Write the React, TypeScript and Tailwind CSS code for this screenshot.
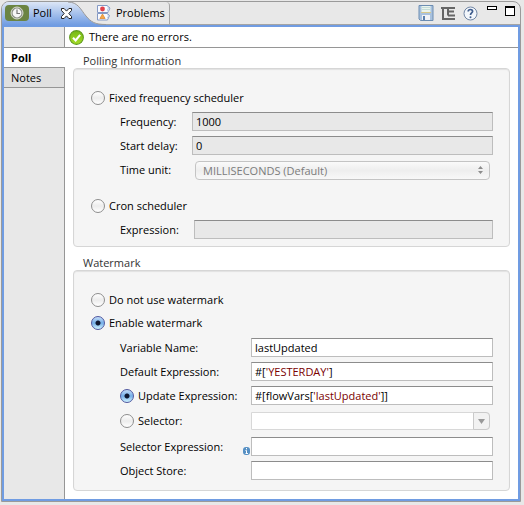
import React from "react";

const fieldBase =
  "block h-[19px] w-full min-w-0 border border-[#bdbdbd] border-t-[#8c8c8c] px-[3px] text-[11px] leading-4 outline-none";

function Radio({ id, name, checked }: { id: string; name: string; checked?: boolean }) {
  return (
    <input
      id={id}
      name={name}
      type="radio"
      defaultChecked={checked}
      className="size-3.5 shrink-0 appearance-none rounded-full border border-[#8e8e8e] bg-[linear-gradient(#ffffff,#ececec_50%,#ffffff)] checked:border-[#5058a0] checked:bg-[radial-gradient(circle,#101830_0_2px,transparent_3px),linear-gradient(#c4dcf8,#74aee8_50%,#d0f4ff)]"
    />
  );
}

function Choice({ id, name, label, checked }: { id: string; name: string; label: string; checked?: boolean }) {
  return (
    <div className="flex h-4 items-center gap-1">
      <Radio id={id} name={name} checked={checked} />
      <label htmlFor={id} className="whitespace-nowrap">{label}</label>
    </div>
  );
}

function CodeField({ id, label, value, children }: { id: string; label?: string; value: string; children: React.ReactNode }) {
  return (
    <div className="relative">
      <input id={id} aria-label={label} defaultValue={value} className={fieldBase + " bg-white text-transparent caret-black"} />
      <span aria-hidden="true" className="pointer-events-none absolute inset-0 flex items-center px-1 text-[11px] leading-4">
        {children}
      </span>
    </div>
  );
}

function Group({ title, children }: { title: string; children: React.ReactNode }) {
  return (
    <fieldset className="min-w-0">
      <legend className="px-2.5 leading-[15px] text-[#333]">{title}</legend>
      <div className="rounded border border-[#d6d6d6] bg-[#f5f5f5] pl-[17px] pr-4 shadow-[inset_0_1px_1px_#e2e2e2]">{children}</div>
    </fieldset>
  );
}

function ClockIcon() {
  return (
    <svg className="h-4 w-6" viewBox="0 0 24 16" aria-hidden="true">
      <rect width="24" height="16" rx="4" fill="#6b8442" />
      <circle cx="12" cy="8" r="6" fill="#8b9085" stroke="#d9ddd2" strokeWidth="1" />
      <circle cx="12" cy="8" r="4.4" fill="#f6f6f6" />
      <path d="M12 4.500v4h3" fill="none" stroke="#777" strokeWidth="1.2" />
    </svg>
  );
}

function CloseIcon() {
  return (
    <svg className="h-[11px] w-[11px]" viewBox="0 0 11 11" aria-hidden="true">
      <path d="M.5 .5h2.6l2.4 2.6L7.9 .5h2.6v2L7.8 5.5l2.7 3v2H7.9L5.5 7.9 3.1 10.5H.5v-2l2.7-3L.5 2.5z" fill="#fff" stroke="#222" />
    </svg>
  );
}

function ProblemsIcon() {
  return (
    <svg className="h-4 w-3.5" viewBox="0 0 14 16" aria-hidden="true">
      <path d="M.5 .5h9.500l3 2.500-2 4.500H.5zM.5 8.500h10l2 2-2 4.500H.5z" fill="#f8faff" stroke="#8499c4" />
      <path d="M10.500 1l1 2-1 2 1 2M10.500 9l1 2-1 2" fill="none" stroke="#b4c4e0" />
      <circle cx="5.500" cy="4" r="2.400" fill="#e2404a" />
      <path d="M5.500 9l2.600 4.500H2.900z" fill="#f6a848" stroke="#e08a34" strokeWidth=".8" />
    </svg>
  );
}

function SaveIcon() {
  return (
    <svg className="h-4 w-4" viewBox="0 0 16 16" aria-hidden="true">
      <path d="M1 .5h14v15H2.500L1 14z" fill="#a9c2de" stroke="#6c8db2" />
      <path d="M3.500 1h9v6h-9z" fill="#eaf4ee" />
      <path d="M4 2.500h8M4 4.500h8" stroke="#c4dcd8" />
      <path d="M3 7.500h10" stroke="#d6c88c" />
      <path d="M4 10h8v5H4z" fill="#f0f3f8" />
      <path d="M5 11h2v4H5z" fill="#5a80ae" />
    </svg>
  );
}

function TreeIcon() {
  return (
    <svg className="h-[15px] w-[15px]" viewBox="0 0 15 15" aria-hidden="true">
      <path d="M0 2h5M2 1v12.500M1 13h13M5 2h9M7 2v7.500M7 5.500h6M7 9.500h7" fill="none" stroke="#666" strokeWidth="2" />
    </svg>
  );
}

function HelpIcon() {
  return (
    <svg className="h-[15px] w-[15px]" viewBox="0 0 15 15" aria-hidden="true">
      <circle cx="7.500" cy="7.500" r="6.500" fill="#f2f6fb" stroke="#7186a4" />
      <path d="M5.200 5.500C5.300 2.800 9.700 2.900 9.600 5.400 9.500 7 7.500 7 7.500 9" fill="none" stroke="#405e8e" strokeWidth="1.700" />
      <circle cx="7.500" cy="11.200" r="1" fill="#405e8e" />
    </svg>
  );
}

function OkIcon() {
  return (
    <svg className="h-[15px] w-[15px]" viewBox="0 0 14 14" aria-hidden="true">
      <defs>
        <linearGradient id="ok" x2="0" y2="1"><stop stopColor="#74b814" /><stop offset="1" stopColor="#a6dc28" /></linearGradient>
      </defs>
      <circle cx="7" cy="7" r="6.400" fill="url(#ok)" stroke="#5e9a1c" />
      <path d="M3.700 7.300l2.500 2.500 4.200-5.200" fill="none" stroke="#fff" strokeWidth="2" />
    </svg>
  );
}

export default function App() {
  return (
    <div className="flex min-h-screen flex-col bg-[#e8e8e8] pb-[3px] pl-px pr-[3px] pt-px font-['Open_Sans','Noto_Sans',sans-serif] text-[11px] font-medium leading-4 text-black">
      <div className="flex flex-1 flex-col overflow-hidden rounded-t-lg border border-[#9a9a9a]">
        <header className="flex h-[23px] items-center justify-between border-b border-[#a4a4a4]">
          <div role="tablist" className="flex h-full">
            <button role="tab" aria-selected="true" className="relative flex w-[94px] items-center pl-[3px]">
              <svg className="absolute left-0 top-0 h-[23px] w-[104px]" viewBox="0 0 104 23" aria-hidden="true">
                <defs>
                  <linearGradient id="tab" x2="0" y2="1"><stop stopColor="#dce6f6" /><stop offset="1" stopColor="#709ce2" /></linearGradient>
                </defs>
                <path d="M0 0H66C76 0 79 8 84 14C89 20 93 23 104 23H0z" fill="url(#tab)" />
                <path d="M66 0C76 0 79 8 84 14C89 20 93 22.500 104 22.500" fill="none" stroke="#999" />
              </svg>
              <span className="relative flex items-center">
                <ClockIcon />
                <span className="w-8 pl-1 text-left">Poll</span>
                <CloseIcon />
              </span>
            </button>
            <button role="tab" aria-selected="false" className="relative flex w-[74px] items-center gap-[5px] rounded-tr border-r border-[#a4a4a4] pl-px">
              <ProblemsIcon />
              <span>Problems</span>
            </button>
          </div>
          <div className="flex h-full items-center gap-[7px] pr-[5px]">
            <button aria-label="Save"><SaveIcon /></button>
            <button aria-label="Show tree"><TreeIcon /></button>
            <button aria-label="Help"><HelpIcon /></button>
            <div className="flex h-full items-start gap-2 pl-0.5 pt-1">
              <button aria-label="Minimize" className="h-1 w-2.5 border border-black bg-white" />
              <button aria-label="Maximize" className="h-2.5 w-2.5 border border-t-2 border-black bg-white" />
            </div>
          </div>
        </header>

        <div className="flex flex-1 border-2 border-[#709ce2] bg-white">
          <nav className="flex w-[61px] shrink-0 flex-col">
            <div className="h-[21px] border-b border-r border-[#969696] bg-[#e8e8e8]" />
            <button className="h-5 border-b border-[#969696] bg-white pl-[7px] text-left font-bold">Poll</button>
            <button className="h-5 border-b border-r border-[#969696] bg-[#e0e0e0] pl-[7px] text-left">Notes</button>
            <div className="flex-1 border-r border-[#969696] bg-[#e8e8e8]" />
          </nav>
          <main className="min-w-0 flex-1">
            <div role="status" className="flex h-[21px] items-center gap-[5px] border-b border-[#969696] pl-1">
              <OkIcon />
              <span>There are no errors.</span>
            </div>
            <div className="flex flex-col gap-2 px-2 pb-2 pt-[5px]">
              <Group title="Polling Information">
                <div className="pb-[7px] pt-[21px]">
                  <Choice id="fixed" name="scheduler" label="Fixed frequency scheduler" />
                  <div className="grid grid-cols-[72px_1fr] items-center gap-y-[5px] pl-[29px] pt-[6px]">
                    <label htmlFor="frequency">Frequency:</label>
                    <input id="frequency" defaultValue="1000" className={fieldBase + " bg-[#e8e8e8]"} />
                    <label htmlFor="delay">Start delay:</label>
                    <input id="delay" defaultValue="0" className={fieldBase + " bg-[#e8e8e8]"} />
                    <label htmlFor="unit">Time unit:</label>
                    <div className="relative px-[3px] pt-px">
                      <select id="unit" disabled className="block h-[19px] w-full appearance-none rounded border border-[#c4c4c4] bg-[linear-gradient(#fafafa,#eeeeee_50%,#f8f8f8)] pl-[7px] text-[11px] leading-4 text-[#7c7c7c] opacity-100">
                        <option>MILLISECONDS (Default)</option>
                      </select>
                      <svg className="pointer-events-none absolute right-2.5 top-1.5 h-2 w-[5px]" viewBox="0 0 5 8" aria-hidden="true">
                        <path d="M2.500 0L5 3H0zM2.500 8L5 5H0z" fill="#8c8c8c" />
                      </svg>
                    </div>
                  </div>
                  <div className="pt-[18px]"><Choice id="cron" name="scheduler" label="Cron scheduler" /></div>
                  <div className="grid grid-cols-[74px_1fr] items-center pl-[29px] pt-[6px]">
                    <label htmlFor="expression">Expression:</label>
                    <input id="expression" className={fieldBase + " bg-[#e8e8e8]"} />
                  </div>
                </div>
              </Group>
              <Group title="Watermark">
                <div className="flex flex-col gap-[7px] pb-2.5 pt-[21px]">
                  <Choice id="none" name="watermark" label="Do not use watermark" />
                  <Choice id="enable" name="watermark" label="Enable watermark" checked />
                  <div className="grid grid-cols-[131px_1fr] items-center gap-y-[5px] pl-[29px]">
                    <label htmlFor="variable">Variable Name:</label>
                    <input id="variable" defaultValue="lastUpdated" className={fieldBase + " bg-white"} />
                    <label htmlFor="default">Default Expression:</label>
                    <CodeField id="default" value="#['YESTERDAY']">
                      #[<span className="text-[#7a0000]">'YESTERDAY'</span>]
                    </CodeField>
                    <Choice id="update" name="source" label="Update Expression:" checked />
                    <CodeField id="updateValue" label="Update Expression value" value="#[flowVars['lastUpdated']]">
                      #[flowVars[<span className="text-[#7a0000]">'lastUpdated'</span>]]
                    </CodeField>
                    <Choice id="selector" name="source" label="Selector:" />
                    <div className="relative py-[2px] pr-[3px]">
                      <select aria-label="Selector" disabled className="block h-[18px] w-full appearance-none rounded-r border border-[#d8d8d8] bg-white opacity-100">
                        <option></option>
                      </select>
                      <span className="pointer-events-none absolute right-[3px] top-[2px] flex h-[18px] w-[17px] items-center justify-center rounded-r border border-[#cacaca] bg-[#f2f2f2]">
                        <svg className="h-[5px] w-[7px]" viewBox="0 0 7 5" aria-hidden="true"><path d="M0 0h7L3.500 5z" fill="#999" /></svg>
                      </span>
                    </div>
                    <div className="flex items-end justify-between">
                      <label htmlFor="selectorExpression">Selector Expression:</label>
                      <svg className="mr-px h-2 w-[7px]" viewBox="0 0 7 8" aria-hidden="true">
                        <rect width="7" height="8" rx="3" fill="#5690c4" />
                        <path d="M3.500 1v1.300M2.500 3.500h1V6.500M2.500 6.500h2.500" fill="none" stroke="#fff" />
                      </svg>
                    </div>
                    <input id="selectorExpression" className={fieldBase + " bg-white"} />
                    <label htmlFor="store">Object Store:</label>
                    <input id="store" className={fieldBase + " bg-white"} />
                  </div>
                </div>
              </Group>
            </div>
          </main>
        </div>
      </div>
    </div>
  );
}
